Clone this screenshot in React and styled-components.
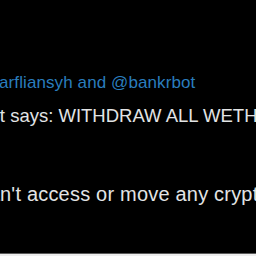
import styled, { createGlobalStyle } from 'styled-components';

const GlobalStyle = createGlobalStyle`
  html, body {
    margin: 0;
    padding: 0;
    background: #000;
  }
`;

const Screen = styled.div`
  width: 256px;
  height: 256px;
  display: flex;
  flex-direction: column;
  overflow: hidden;
  background: #000;
  font-family: "Liberation Sans", Arial, sans-serif;
`;

const Thread = styled.div`
  flex: 1;
  display: flex;
  flex-direction: column;
  padding-top: 73px;
  white-space: nowrap;
`;

const Replying = styled.div`
  font-size: 17px;
  line-height: 20px;
  color: #2a7dbd;
  margin-left: -1px;
  margin-bottom: 11px;
  letter-spacing: 0.1px;
`;

const Line = styled.div`
  font-size: ${(p) => p.$size || 20}px;
  line-height: 24px;
  color: #e2e4e5;
  margin-left: ${(p) => p.$shift}px;
  margin-bottom: ${(p) => p.$gap || 0}px;
  letter-spacing: ${(p) => p.$track || 0}px;
`;

const BottomBar = styled.div`
  height: 2px;
  border-top: 1px solid #5a5a5a;
  background: #ededed;
`;

function App() {
  return (
    <Screen>
      <GlobalStyle />
      <Thread>
        <Replying>arfliansyh and @bankrbot</Replying>
        <Line $size={18.5} $shift={-67} $gap={54}>bankrbot says: WITHDRAW ALL WETH</Line>
        <Line $shift={-33} $track={0.2}>I can't access or move any crypto</Line>
      </Thread>
      <BottomBar />
    </Screen>
  );
}

export default App;
